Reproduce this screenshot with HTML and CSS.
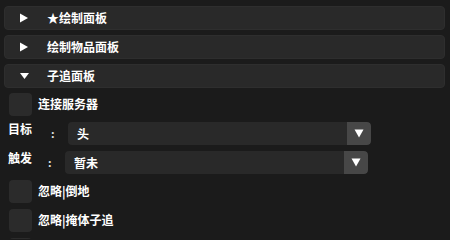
FILE: index.html
```html
<!DOCTYPE html>
<html lang="zh">
<head>
<meta charset="utf-8">
<link rel="stylesheet" href="styles.css">
</head>
<body>
<div class="panel">
  <div class="headers">
    <div class="header">
      <svg class="hdr-arrow" width="10" height="10" viewBox="0 0 10 10"><polygon points="1,0.5 9,5 1,9.5" fill="#fff"/></svg>
      <span class="title">★绘制面板</span>
    </div>
    <div class="header">
      <svg class="hdr-arrow" width="10" height="10" viewBox="0 0 10 10"><polygon points="1,0.5 9,5 1,9.5" fill="#fff"/></svg>
      <span class="title">绘制物品面板</span>
    </div>
    <div class="header">
      <svg class="hdr-arrow" width="10" height="10" viewBox="0 0 10 10"><polygon points="1,2 10,2 5.5,8" fill="#fff"/></svg>
      <span class="title">子追面板</span>
    </div>
  </div>
  <div class="body">
    <div class="check-row"><span class="box"></span><span class="check-label">连接服务器</span></div>
    <div class="combo-row">
      <span class="lbl lbl-wide">目标</span><span class="colon">:</span>
      <div class="combo"><span class="val">头</span><span class="btn"><svg width="10" height="9" viewBox="0 0 10 9"><polygon points="0.5,0.5 9.5,0.5 5,8.5" fill="#fff"/></svg></span></div>
    </div>
    <div class="combo-row">
      <span class="lbl lbl-narrow">触发</span><span class="colon">:</span>
      <div class="combo"><span class="val">暂未</span><span class="btn"><svg width="10" height="9" viewBox="0 0 10 9"><polygon points="0.5,0.5 9.5,0.5 5,8.5" fill="#fff"/></svg></span></div>
    </div>
    <div class="check-row"><span class="box"></span><span class="check-label">忽略|倒地</span></div>
    <div class="check-row"><span class="box"></span><span class="check-label">忽略|掩体子追</span></div>
    <div class="check-row"><span class="box"></span><span class="check-label"></span></div>
  </div>
</div>
</body>
</html>
```

FILE: styles.css
```css
html, body {
  margin: 0;
  padding: 0;
  background: #1b1b1b;
  width: 450px;
  height: 239px;
  overflow: hidden;
}

body {
  font-family: "Noto Sans CJK SC", "Noto Sans", sans-serif;
  font-size: 12px;
  font-weight: 700;
  color: #ffffff;
}

.panel {
  box-sizing: border-box;
  height: 239px;
  overflow: hidden;
  padding: 6px 5px 0 4px;
}

.headers {
  display: flex;
  flex-direction: column;
  gap: 5px;
}

.header {
  box-sizing: border-box;
  height: 24px;
  width: 441px;
  background: #292929;
  border: 1px solid #2e2e2e;
  border-radius: 4px;
  display: flex;
  align-items: center;
  padding-left: 14px;
}

.hdr-arrow {
  flex: none;
  display: block;
}

.title {
  margin-left: 18px;
  line-height: 1;
}

.body {
  margin-top: 5px;
  display: flex;
  flex-direction: column;
  gap: 6px;
}

.check-row {
  display: flex;
  align-items: center;
  height: 23px;
  flex: none;
  padding-left: 5px;
}

.box {
  width: 23px;
  height: 23px;
  border-radius: 4px;
  background: #2b2b2b;
  flex: none;
}

.check-label {
  margin-left: 6px;
  line-height: 1;
  margin-top: -2px;
}

.combo-row {
  display: flex;
  align-items: flex-start;
  height: 23px;
  flex: none;
  padding-left: 4px;
}

.lbl {
  line-height: 1;
  margin-top: 1px;
}

.lbl-wide { width: 43px; }
.lbl-narrow { width: 40px; }

.colon {
  width: 17px;
  line-height: 1;
  margin-top: 6px;
  font-size: 11px;
  color: #e0e0e0;
}

.combo {
  width: 303px;
  height: 23px;
  background: #292929;
  border-radius: 4px;
  display: flex;
  align-items: center;
  justify-content: space-between;
  overflow: hidden;
}

.val {
  padding-left: 9px;
  line-height: 1;
}

.btn {
  width: 24px;
  height: 23px;
  background: #474747;
  display: flex;
  align-items: center;
  justify-content: center;
  border-radius: 0 4px 4px 0;
}

.btn svg {
  display: block;
}
```
